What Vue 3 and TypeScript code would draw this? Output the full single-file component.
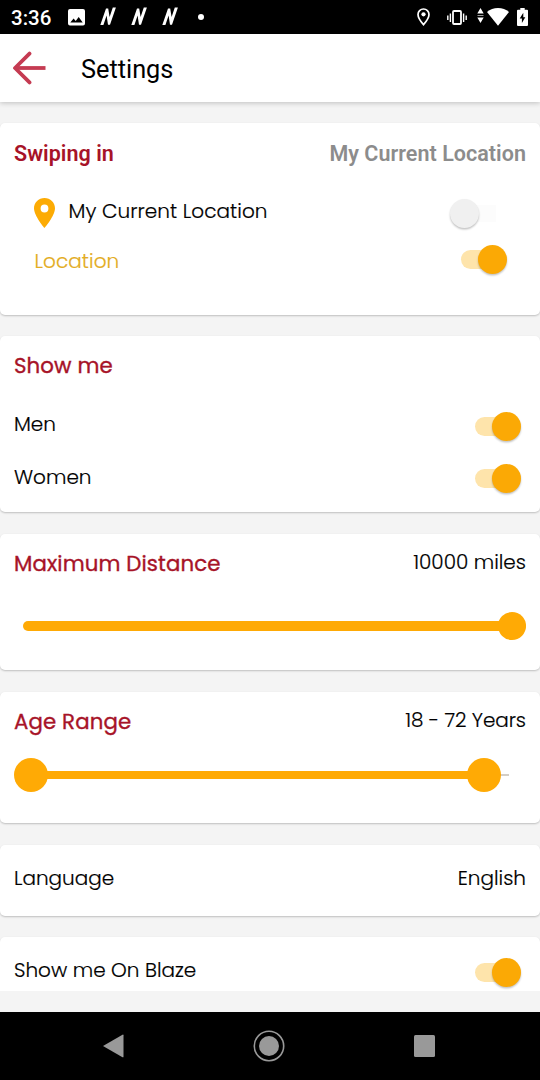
<script setup lang="ts">
import { ref, computed } from 'vue'

const useCurrent = ref(false)
const useLocation = ref(true)
const men = ref(true)
const women = ref(true)
const onBlaze = ref(true)

const distance = ref(10000)
const age = ref({ from: 18, to: 72 })
const AGE_MIN = 18
const AGE_MAX = 75

const ageFill = computed(() => ({
  width: ((age.value.to - age.value.from) / (AGE_MAX - AGE_MIN)) * 100 + '%',
}))
</script>

<template>
  <div class="phone">
    <div class="status">
      <span class="clock">3:36</span>
      <svg class="picture" width="17" height="17" viewBox="0 0 17 17">
        <path fill="#fff" fill-rule="evenodd" d="M2 0h13a2 2 0 0 1 2 2v12.500a2 2 0 0 1-2 2H2a2 2 0 0 1-2-2V2a2 2 0 0 1 2-2zM2.300 13.500h12.400l-4-5.400-3 4-2.100-2.500z" />
      </svg>
      <svg v-for="n in 3" :key="n" class="slash" width="17" height="19" viewBox="0 0 17 19">
        <path fill="#fff" d="M.3 18L6 1.500H8.200L9.600 10L12.800.5H15.900L10 17.800H8L6.600 8.500L3.400 18z" />
      </svg>
      <span class="dot"></span>
      <span class="spacer"></span>
      <svg class="pin-outline" width="13" height="18" viewBox="0 0 13 18">
        <path fill="none" stroke="#fff" stroke-width="1.700" d="M6.500 1C3.400 1 1 3.400 1 6.400c0 3.900 5.500 10.200 5.500 10.200S12 10.300 12 6.400C12 3.400 9.600 1 6.500 1z" />
        <circle cx="6.500" cy="6.300" r="2.100" fill="#fff" />
      </svg>
      <svg class="vibrate" width="20" height="15" viewBox="0 0 20 15">
        <rect x="6" y="1" width="8" height="13" rx="1" fill="none" stroke="#fff" stroke-width="1.800" />
        <path stroke="#fff" stroke-width="1.400" d="M.8 5.500v4.500M3.400 3.500v8.500M16.600 3.500v8.500M19.200 5.500v4.500" />
      </svg>
      <svg class="updown" width="7" height="15" viewBox="0 0 7 15">
        <path fill="#fff" d="M3.500 0L6.700 5.600H.3zM3.500 15L6.700 9.400H.3z" />
        <path fill="#999" d="M.5 7h6v1h-6z" />
      </svg>
      <svg class="wifi" width="22" height="18" viewBox="0 0 22 18">
        <path fill="#fff" d="M11 17.700L0 4C3 1.400 6.800 0 11 0s8 1.400 11 4z" />
      </svg>
      <svg class="battery" width="11" height="18" viewBox="0 0 11 18">
        <path fill="#fff" d="M3.300 0h4.400v1.800H10a1 1 0 0 1 1 1V17a1 1 0 0 1-1 1H1a1 1 0 0 1-1-1V2.800a1 1 0 0 1 1-1h2.300z" />
        <path fill="#000" d="M6.300 4.800v4.400h2L4.900 15v-4.500H2.700z" />
      </svg>
    </div>

    <header class="bar">
      <svg class="back" width="34" height="34" viewBox="0 0 34 34">
        <path fill="none" stroke="#c53b52" stroke-width="3.800" stroke-linecap="round" stroke-linejoin="round" d="M17.500 2.600L3 17L17.500 31.400" />
        <path stroke="#c53b52" stroke-width="3.800" d="M3.500 17H33.500" />
      </svg>
      <h1>Settings</h1>
    </header>

    <main>
      <section class="card swiping">
        <div class="row head roboto">
          <span class="title">Swiping in</span>
          <span class="muted">My Current Location</span>
        </div>
        <div class="row current">
          <svg class="pin" width="21" height="30" viewBox="0 0 21 30">
            <path fill="#fcab04" fill-rule="evenodd" d="M10.500 0C4.700 0 0 4.600 0 10.300 0 18 10.500 30 10.500 30S21 18 21 10.300C21 4.600 16.300 0 10.500 0zm0 6.600a3.900 3.900 0 1 1 0 7.800 3.900 3.900 0 0 1 0-7.800z" />
          </svg>
          <span class="grow">My Current Location</span>
          <span class="switch" :class="{ on: useCurrent }" @click="useCurrent = !useCurrent"><i></i></span>
        </div>
        <div class="row location">
          <span class="grow place">Location</span>
          <span class="switch" :class="{ on: useLocation }" @click="useLocation = !useLocation"><i></i></span>
        </div>
      </section>

      <section class="card show">
        <div class="row head"><span class="title">Show me</span></div>
        <div class="row men">
          <span>Men</span>
          <span class="switch" :class="{ on: men }" @click="men = !men"><i></i></span>
        </div>
        <div class="row women">
          <span>Women</span>
          <span class="switch" :class="{ on: women }" @click="women = !women"><i></i></span>
        </div>
      </section>

      <section class="card distance">
        <div class="row head">
          <span class="title">Maximum Distance</span>
          <span class="value">{{ distance }} miles</span>
        </div>
        <div class="slider single"><b></b></div>
      </section>

      <section class="card age">
        <div class="row head">
          <span class="title">Age Range</span>
          <span class="value years">{{ age.from }} - {{ age.to }} Years</span>
        </div>
        <div class="slider double">
          <div class="fill" :style="ageFill"><b></b><b></b></div>
        </div>
      </section>

      <section class="card language">
        <div class="row single-line">
          <span>Language</span>
          <span>English</span>
        </div>
      </section>

      <section class="card blaze">
        <div class="row single-line">
          <span>Show me On Blaze</span>
          <span class="switch" :class="{ on: onBlaze }" @click="onBlaze = !onBlaze"><i></i></span>
        </div>
      </section>
    </main>

    <nav class="nav">
      <svg width="21" height="24" viewBox="0 0 21 24"><path fill="#999" d="M0 12L19.500.7Q20.500.3 20.500 1.300V22.700Q20.500 23.700 19.500 23.200z" /></svg>
      <svg class="home" width="32" height="32" viewBox="0 0 32 32">
        <circle cx="16" cy="16" r="14.700" fill="none" stroke="#999" stroke-width="1.600" />
        <circle cx="16" cy="16" r="10" fill="#999" />
      </svg>
      <svg class="recent" width="21" height="22" viewBox="0 0 21 22"><rect width="21" height="22" rx="1.500" fill="#999" /></svg>
    </nav>
  </div>
</template>

<style>
body {
  margin: 0;
  background: #f4f4f4;
}
</style>

<style scoped>
.phone {
  width: 540px;
  height: 1080px;
  display: flex;
  flex-direction: column;
  overflow: hidden;
  background: #f4f4f4;
  color: #000;
  font-family: Poppins, Inter, "Liberation Sans", sans-serif;
  font-size: 20px;
  font-weight: 300;
  white-space: nowrap;
}
svg {
  display: block;
  flex: none;
}
.status {
  height: 34px;
  flex: none;
  box-sizing: border-box;
  display: flex;
  align-items: center;
  padding: 0 12px 0 11px;
  background: #000;
  color: #fff;
  font-family: Roboto, sans-serif;
}
.clock {
  width: 57px;
  font-size: 20.500px;
  font-weight: 500;
  line-height: 34px;
  padding-top: 1px;
}
.picture {
  margin-right: 15px;
}
.slash {
  margin: 0 14px 2px 0;
}
.dot {
  width: 6px;
  height: 6px;
  margin-left: 5px;
  border-radius: 50%;
  background: #fff;
}
.spacer {
  flex: 1;
}
.pin-outline {
  margin-right: 17px;
}
.vibrate {
  margin-right: 10px;
}
.updown {
  margin: 0 3px 3px 0;
}
.wifi {
  margin-right: 8px;
}
.bar {
  height: 68px;
  flex: none;
  display: flex;
  align-items: center;
  padding-left: 12px;
  background: #fff;
  box-shadow: 0 1px 5px rgba(0, 0, 0, 0.22);
}
h1 {
  margin: 3px 0 0 35px;
  font: 400 25.300px/32px Roboto, sans-serif;
}
main {
  height: 889px;
  flex: none;
  box-sizing: border-box;
  padding-top: 21px;
  overflow: hidden;
}
.card {
  background: #fff;
  border-radius: 5px;
  box-shadow: 0 1px 2px rgba(0, 0, 0, 0.22);
  overflow: hidden;
  margin-bottom: 22px;
}
.swiping {
  height: 192px;
  margin-bottom: 21px;
}
.show {
  height: 176px;
}
.distance {
  height: 136px;
}
.age {
  height: 131px;
}
.language {
  height: 71px;
  margin-bottom: 21px;
}
.blaze {
  height: 71px;
}
.row {
  display: flex;
  align-items: center;
  justify-content: space-between;
  padding: 0 14px;
  -webkit-text-stroke: 0.200px currentColor;
}
.head {
  height: 59px;
}
.title {
  color: #a71328;
  font-size: 21.300px;
  font-weight: 400;
  letter-spacing: 0.120px;
  -webkit-text-stroke: 0.350px #a71328;
}
.roboto {
  height: 60px;
  font-family: Roboto, sans-serif;
}
.roboto span {
  font-size: 21.500px;
  font-weight: 600;
  letter-spacing: 0.040px;
  -webkit-text-stroke: 0;
}
.muted {
  color: #8c8c8c;
}
.value {
  padding-bottom: 3px;
}
.years {
  letter-spacing: -0.080px;
}
.grow {
  flex: 1;
  letter-spacing: 0.070px;
}
.current {
  height: 56px;
  padding: 0 44px 0 34px;
}
.pin {
  margin: 3px 13.500px 0 0;
}
.location {
  height: 44px;
  padding: 0 33px 0 34.500px;
}
.place {
  color: #e3ac22;
}
.men {
  height: 58px;
  padding-right: 19px;
}
.women {
  height: 48px;
  padding-right: 19px;
}
.single-line {
  height: 66px;
}
.blaze .row {
  padding-right: 19px;
}
.switch {
  width: 46px;
  height: 29px;
  margin-top: 5px;
  display: flex;
  align-items: center;
  background: linear-gradient(#fcfcfc, #fcfcfc) right center / 36px 17px no-repeat;
}
.women .switch {
  margin-top: 3px;
}
.switch i {
  width: 29px;
  height: 29px;
  border-radius: 50%;
  background: #f0f0f0;
  box-shadow: 0 1.500px 2px rgba(0, 0, 0, 0.24);
}
.switch.on {
  justify-content: flex-end;
  background: none;
}
.switch.on::before {
  content: "";
  width: 34px;
  height: 19px;
  margin-right: -17px;
  border-radius: 10px;
  background: #fee4ab;
}
.switch.on i {
  position: relative;
  background: #fba905;
}
.location .switch {
  margin: 0 0 4px;
}
.slider {
  display: flex;
  align-items: center;
}
.slider b {
  flex: none;
  border-radius: 50%;
  background: #ffaa05;
}
.single {
  height: 10px;
  margin: 28px 14px 0 23px;
  border-radius: 5px;
  background: #ffaa05;
  justify-content: flex-end;
}
.single b {
  width: 28px;
  height: 28px;
}
.double {
  height: 2px;
  margin: 23px 31px 0;
  background: #d4cec5;
}
.fill {
  height: 8px;
  flex: none;
  display: flex;
  align-items: center;
  justify-content: space-between;
  background: #ffaa05;
}
.fill b {
  width: 34px;
  height: 34px;
  margin: 0 -17px;
}
.nav {
  height: 68px;
  margin-top: 21px;
  flex: none;
  display: flex;
  align-items: center;
  padding-left: 103px;
  background: #000;
}
.home {
  margin-left: 129px;
}
.recent {
  margin-left: 129px;
}
</style>
